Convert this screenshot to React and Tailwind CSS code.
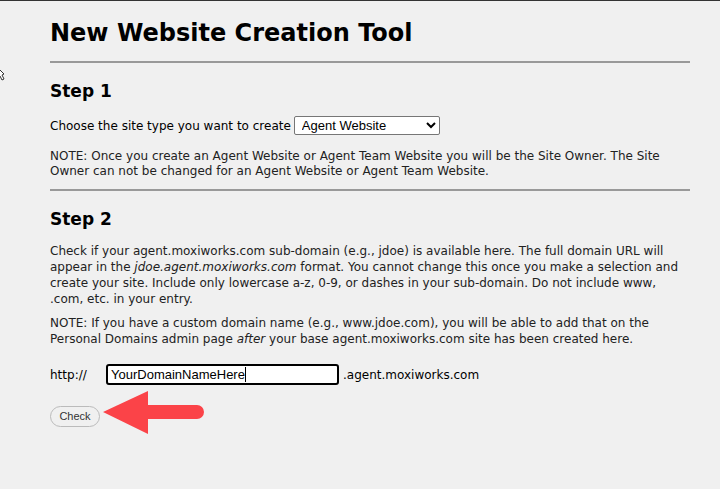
import React from 'react';

const App = () => {
    return (
        <div className="relative w-[720px] h-[489px] overflow-hidden bg-[#f0f0f0] border-t border-[#333] font-['DejaVu_Sans',Verdana,sans-serif] text-black">
            <svg className="absolute left-0 top-[68px]" width="6" height="14" viewBox="0 0 6 14">
                <path d="M0 1 L4 5 L2 6 L4 10 L2 11 L0 7" fill="white" stroke="#333" strokeWidth="1" />
            </svg>
            <div className="w-[640px] ml-[50px]">
                <h1 className="text-[24px] font-bold leading-none pt-[20px] pb-[16px]">New Website Creation Tool</h1>
                <hr className="border-0 border-t-2 border-[#999]" />

                <h2 className="text-[17px] font-bold leading-none mt-[20px] mb-[16px]">Step 1</h2>
                <div className="flex items-center text-[12px]">
                    <span>Choose the site type you want to create</span>
                    <select defaultValue="agent" className="ml-[3px] w-[146px] h-[19px] border border-[#767676] bg-white text-[13px] font-['Liberation_Sans',Arial,sans-serif] px-[3px] rounded-[2px]">
                        <option value="agent">Agent Website</option>
                        <option value="team">Agent Team Website</option>
                    </select>
                </div>
                <p className="text-[12px] leading-[15px] mt-[14px] mb-[10px] text-[#222]">
                    NOTE: Once you create an Agent Website or Agent Team Website you will be the Site Owner. The Site Owner can not be changed for an Agent Website or Agent Team Website.
                </p>
                <hr className="border-0 border-t-2 border-[#999]" />

                <h2 className="text-[17px] font-bold leading-none mt-[20px] mb-[15px]">Step 2</h2>
                <p className="text-[12px] leading-[16px] text-[#222]">
                    Check if your agent.moxiworks.com sub-domain (e.g., jdoe) is available here. The full domain URL will appear in the <i>jdoe.agent.moxiworks.com</i> format. You cannot change this once you make a selection and create your site. Include only lowercase a-z, 0-9, or dashes in your sub-domain. Do not include www, .com, etc. in your entry.
                </p>
                <p className="text-[12px] leading-[16px] mt-[8px] text-[#222]">
                    NOTE: If you have a custom domain name (e.g., www.jdoe.com), you will be able to add that on the Personal Domains admin page <i>after</i> your base agent.moxiworks.com site has been created here.
                </p>

                <div className="flex items-center mt-[17px] text-[12px]">
                    <span className="w-[56px]">http://</span>
                    <div className="w-[233px] h-[21px] border-2 border-black rounded-[3px] bg-white flex items-center px-[3px] font-['Liberation_Sans',Arial,sans-serif] text-[13px]">
                        YourDomainNameHere<span className="w-px h-[15px] bg-black" />
                    </div>
                    <span className="ml-[4px]">.agent.moxiworks.com</span>
                </div>

                <div className="relative mt-[18px]">
                    <button className="w-[50px] h-[21px] rounded-full border border-[#bbb] bg-[#f0f0f0] text-[11px] font-['Liberation_Sans',Arial,sans-serif] text-[#333]">
                        Check
                    </button>
                    <svg className="absolute left-[52px] top-[-13px]" width="104" height="46" viewBox="0 0 104 46">
                        <path d="M1 22 L46 1 L46 15 L95 15 A7 7 0 0 1 95 29 L46 29 L46 44 Z" fill="#fb4348" />
                    </svg>
                </div>
            </div>
        </div>
    );
};

export default App;
